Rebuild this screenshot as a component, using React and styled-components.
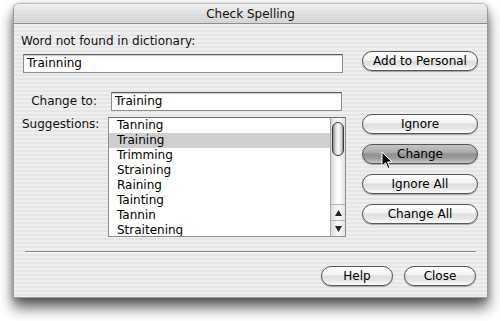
import React from "react";
import styled, { createGlobalStyle } from "styled-components";

const GlobalStyle = createGlobalStyle`
  html, body {
    margin: 0;
    padding: 0;
    background: #ffffff;
    font-family: "DejaVu Sans", "Liberation Sans", sans-serif;
  }
`;

const Page = styled.div`
  width: 500px;
  height: 321px;
  padding: 3px 0 0 13px;
  box-sizing: border-box;
  overflow: hidden;
`;

const Dialog = styled.div`
  position: relative;
  width: 475px;
  height: 295px;
  display: flex;
  flex-direction: column;
  border: 1px solid #9a9a9a;
  border-top-color: #b8b8b8;
  border-radius: 6px 6px 0 0;
  box-sizing: border-box;
  background: repeating-linear-gradient(#efefef 0 2px, #e6e6e6 2px 4px);
  box-shadow: 0 10px 14px rgba(0, 0, 0, 0.6), 0 2px 6px rgba(0, 0, 0, 0.25);
`;

const TitleBar = styled.div`
  height: 19px;
  flex: none;
  display: flex;
  align-items: center;
  justify-content: center;
  border-bottom: 1px solid #8c8c8c;
  border-radius: 5px 5px 0 0;
  background:
    repeating-linear-gradient(rgba(255, 255, 255, 0.18) 0 1px, rgba(0, 0, 0, 0) 1px 2px),
    linear-gradient(#eeeeee, #dadada 60%, #d0d0d0);
  font-size: 12px;
  color: #111;
`;

const Content = styled.div`
  flex: 1;
  display: flex;
  flex-direction: column;
  padding: 10px 9px 0 8px;
`;

const Label = styled.div`
  font-size: 12px;
  line-height: 15px;
  color: #111;
  margin-left: ${({ $ml }) => $ml || 0}px;
`;

const TopRow = styled.div`
  display: grid;
  grid-template-columns: 320px 116px;
  column-gap: 20px;
  margin-top: 2px;
  align-items: start;
`;

const TextField = styled.div`
  height: 19px;
  width: ${({ $w }) => $w}px;
  box-sizing: border-box;
  background: #fff;
  border: 1px solid #8e8e8e;
  border-top-color: #5e5e5e;
  box-shadow: inset 0 1px 1px rgba(0, 0, 0, 0.2);
  font-size: 12px;
  line-height: 17px;
  padding-left: 3px;
  color: #000;
  margin-top: ${({ $mt }) => $mt || 0}px;
  margin-left: ${({ $ml }) => $ml || 0}px;
`;

const Button = styled.button`
  position: relative;
  width: ${({ $w }) => $w}px;
  height: 20px;
  padding: 0;
  border: 1px solid #555;
  border-radius: 10px;
  font-family: inherit;
  font-size: 12px;
  color: #000;
  box-shadow: 0 1px 1px rgba(0, 0, 0, 0.3);
  background: ${({ $pressed }) =>
    $pressed
      ? "linear-gradient(#c4c4c4 0%, #acacac 40%, #8f8f8f 52%, #9d9d9d 75%, #c9c9c9 100%)"
      : "linear-gradient(#fefefe 0%, #f3f3f3 42%, #dedede 52%, #e6e6e6 75%, #fbfbfb 100%)"};
`;

const Middle = styled.div`
  display: grid;
  grid-template-columns: 324px 116px;
  column-gap: 16px;
  margin-top: 19px;
`;

const LeftCol = styled.div`
  display: flex;
  flex-direction: column;
  gap: 6px;
`;

const FieldRow = styled.div`
  display: grid;
  grid-template-columns: 86px 1fr;
  align-items: start;
`;

const RowLabel = styled.div`
  font-size: 12px;
  line-height: 19px;
  text-align: right;
  padding-right: 11px;
  color: #111;
  margin-top: ${({ $mt }) => $mt || 0}px;
`;

const ListBox = styled.div`
  width: 238px;
  height: 120px;
  box-sizing: border-box;
  display: flex;
  background: #fff;
  border: 1px solid #8e8e8e;
  border-top-color: #6a6a6a;
`;

const Items = styled.div`
  flex: 1;
  overflow: hidden;
`;

const Item = styled.div`
  height: 15px;
  line-height: 15px;
  font-size: 12px;
  padding-left: 8px;
  color: #000;
  background: ${({ $selected }) => ($selected ? "#cfcfcf" : "transparent")};
`;

const ScrollBar = styled.div`
  width: 15px;
  flex: none;
  display: flex;
  flex-direction: column;
  border-left: 1px solid #a8a8a8;
  box-sizing: border-box;
`;

const Track = styled.div`
  flex: 1;
  padding: 4px 1px 0 1px;
  background: linear-gradient(90deg, #d6d6d6, #f6f6f6 35%, #ffffff 55%, #e2e2e2);
`;

const Thumb = styled.div`
  height: 34px;
  border-radius: 6px;
  border: 1px solid #3a3a3a;
  box-sizing: border-box;
  background: linear-gradient(90deg, #8a8a8a, #e0e0e0 30%, #fafafa 55%, #cfcfcf 85%, #7c7c7c);
`;

const Arrow = styled.div`
  height: 15px;
  display: flex;
  align-items: center;
  justify-content: center;
  border-top: 1px solid #b4b4b4;
  background: linear-gradient(90deg, #dcdcdc, #f8f8f8 50%, #e4e4e4);
`;

const RightCol = styled.div`
  display: flex;
  flex-direction: column;
  gap: 10px;
  padding-top: 22px;
`;

const Separator = styled.div`
  margin: 14px 2px 0 3px;
  height: 1px;
  background: #8a8a8a;
  border-bottom: 1px solid #fafafa;
`;

const BottomRow = styled.div`
  display: flex;
  justify-content: flex-end;
  gap: 11px;
  margin-top: 13px;
  padding-right: 2px;
`;

const Cursor = styled.svg`
  position: absolute;
  left: 367px;
  top: 147px;
`;

const suggestions = [
  "Tanning",
  "Training",
  "Trimming",
  "Straining",
  "Raining",
  "Tainting",
  "Tannin",
  "Straitening",
];

export default function App() {
  return (
    <Page>
      <GlobalStyle />
      <Dialog>
        <TitleBar>Check Spelling</TitleBar>
        <Content>
          <Label $ml={-1}>Word not found in dictionary:</Label>
          <TopRow>
            <TextField $w={320} $mt={3} $ml={1}>Trainning</TextField>
            <Button $w={116}>Add to Personal</Button>
          </TopRow>
          <Middle>
            <LeftCol>
              <FieldRow>
                <RowLabel>Change to:</RowLabel>
                <TextField $w={231} $ml={3}>Training</TextField>
              </FieldRow>
              <FieldRow>
                <RowLabel $mt={-2}>Suggestions:</RowLabel>
                <ListBox>
                  <Items>
                    {suggestions.map((s, i) => (
                      <Item key={s} $selected={i === 1}>
                        {s}
                      </Item>
                    ))}
                  </Items>
                  <ScrollBar>
                    <Track>
                      <Thumb />
                    </Track>
                    <Arrow>
                      <svg width="7" height="6" viewBox="0 0 7 6">
                        <path d="M3.5 0 L7 6 L0 6 Z" fill="#222" />
                      </svg>
                    </Arrow>
                    <Arrow>
                      <svg width="7" height="6" viewBox="0 0 7 6">
                        <path d="M0 0 L7 0 L3.5 6 Z" fill="#222" />
                      </svg>
                    </Arrow>
                  </ScrollBar>
                </ListBox>
              </FieldRow>
            </LeftCol>
            <RightCol>
              <Button $w={116}>Ignore</Button>
              <Button $w={116} $pressed>Change</Button>
              <Button $w={116}>Ignore All</Button>
              <Button $w={116}>Change All</Button>
            </RightCol>
          </Middle>
          <Separator />
          <BottomRow>
            <Button $w={72}>Help</Button>
            <Button $w={72}>Close</Button>
          </BottomRow>
        </Content>
        <Cursor width="12" height="19" viewBox="0 0 12 19">
          <path
            d="M1 1 L1 15 L4.5 11.8 L7 17.5 L9 16.6 L6.6 11 L11 11 Z"
            fill="#000"
            stroke="#fff"
            strokeWidth="1"
            strokeLinejoin="round"
          />
        </Cursor>
      </Dialog>
    </Page>
  );
}
